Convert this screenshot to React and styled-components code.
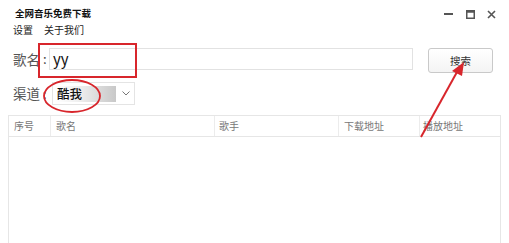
import React from 'react'
import styled, { createGlobalStyle } from 'styled-components'

const Global = createGlobalStyle`
  html, body {
    margin: 0;
    padding: 0;
    background: #ffffff;
  }
  body {
    font-family: "Noto Sans CJK SC", "Liberation Sans", sans-serif;
  }
`

const Window = styled.div`
  position: relative;
  width: 509px;
  height: 243px;
  overflow: hidden;
  background: #ffffff;
`

const TitleBar = styled.div`
  display: flex;
  align-items: center;
  justify-content: space-between;
  height: 24px;
  padding: 2px 13px 0 15px;
  box-sizing: border-box;
`

const Title = styled.div`
  font-size: 9.5px;
  font-weight: 700;
  color: #111;
`

const Controls = styled.div`
  display: flex;
  align-items: center;
  gap: 12px;
  margin-top: 2px;
`

const MenuBar = styled.div`
  display: flex;
  gap: 11px;
  height: 12px;
  padding-left: 13px;
  font-size: 10px;
  line-height: 12px;
  color: #222;
`

const FormRow = styled.div`
  display: flex;
  align-items: flex-start;
  margin-top: ${p => p.top}px;
  padding-left: 13px;
`

const Label = styled.div`
  width: ${p => p.w}px;
  font-size: 13.5px;
  line-height: ${p => p.h}px;
  height: ${p => p.h}px;
  color: #555;
  display: flex;
  align-items: center;
  white-space: nowrap;
`

const Colon = styled.span`
  font-size: 13px;
  color: #444;
  margin-left: 3px;
`

const TextInput = styled.div`
  width: 364px;
  height: 22px;
  box-sizing: border-box;
  border: 1px solid #e2e2e2;
  padding-left: 3px;
  font-size: 15px;
  line-height: 19px;
  color: #111;
`

const Button = styled.div`
  margin-left: 15px;
  width: 65px;
  height: 25px;
  box-sizing: border-box;
  border: 1px solid #c9c9c9;
  border-radius: 3px;
  background: linear-gradient(#ffffff, #f4f4f4);
  display: flex;
  align-items: center;
  justify-content: center;
  font-size: 10.5px;
  color: #333;
`

const Select = styled.div`
  width: 83px;
  height: 23px;
  box-sizing: border-box;
  border: 1px solid #e4e4e4;
  display: flex;
  align-items: center;
  padding: 0 4px 0 3px;
  gap: 6px;
`

const Selected = styled.div`
  flex: 1;
  height: 16px;
  background: linear-gradient(90deg, #ffffff 0%, #eeeeee 40%, #c8c8c8 100%);
  font-size: 12.5px;
  font-weight: 500;
  line-height: 16px;
  color: #111;
  padding-left: 1px;
`

const Table = styled.div`
  margin: 10px 0 0 8px;
  width: 493px;
  height: 140px;
  box-sizing: border-box;
  border: 1px solid #e6e6e6;
`

const HeaderRow = styled.div`
  display: grid;
  grid-template-columns: 41px 164px 124px 81px 1fr;
  height: 20px;
  border-bottom: 1px solid #e6e6e6;
`

const HeaderCell = styled.div`
  font-size: 10px;
  line-height: 20px;
  color: #777;
  padding-left: ${p => p.pad}px;
  border-left: ${p => (p.first ? 'none' : '1px solid #ececec')};
`

const RedBox = styled.div`
  position: absolute;
  left: 38px;
  top: 43px;
  width: 99px;
  height: 35px;
  box-sizing: border-box;
  border: 2px solid #d8262c;
`

const Overlay = styled.svg`
  position: absolute;
  left: 0;
  top: 0;
  pointer-events: none;
`

const columns = [
  { name: '序号', pad: 5 },
  { name: '歌名', pad: 5 },
  { name: '歌手', pad: 4 },
  { name: '下载地址', pad: 5 },
  { name: '播放地址', pad: 3 },
]

export default function App() {
  return (
    <Window>
      <Global />
      <TitleBar>
        <Title>全网音乐免费下载</Title>
        <Controls>
          <svg width="10" height="10" viewBox="0 0 10 10">
            <rect x="0" y="4" width="9" height="2" fill="#555" />
          </svg>
          <svg width="9" height="9" viewBox="0 0 9 9">
            <rect x="0.75" y="0.75" width="7.5" height="7.5" fill="none" stroke="#555" strokeWidth="1.5" />
            <rect x="0.75" y="0.75" width="7.5" height="2" fill="#555" />
          </svg>
          <svg width="9" height="9" viewBox="0 0 9 9">
            <path d="M1 1 L8 8 M8 1 L1 8" stroke="#555" strokeWidth="1.6" />
          </svg>
        </Controls>
      </TitleBar>
      <MenuBar>
        <span>设置</span>
        <span>关于我们</span>
      </MenuBar>
      <FormRow top={12}>
        <Label h={22} w={36}>
          歌名<Colon>:</Colon>
        </Label>
        <TextInput>yy</TextInput>
        <Button>搜索</Button>
      </FormRow>
      <FormRow top={9}>
        <Label h={23} w={39}>
          渠道<Colon>:</Colon>
        </Label>
        <Select>
          <Selected>酷我</Selected>
          <svg width="8" height="5" viewBox="0 0 8 5">
            <path d="M0.5 0.5 L4 4 L7.5 0.5" fill="none" stroke="#777" strokeWidth="1" />
          </svg>
        </Select>
      </FormRow>
      <Table>
        <HeaderRow>
          {columns.map((c, i) => (
            <HeaderCell key={c.name} pad={c.pad} first={i === 0}>
              {c.name}
            </HeaderCell>
          ))}
        </HeaderRow>
      </Table>
      <RedBox />
      <Overlay width="509" height="243" viewBox="0 0 509 243">
        <ellipse cx="72" cy="96" rx="28" ry="16" fill="none" stroke="#d8262c" strokeWidth="1.8" />
        <line x1="421" y1="137" x2="457" y2="72" stroke="#d8262c" strokeWidth="2" />
        <polygon points="464,62 452,71 462,76" fill="#d8262c" />
      </Overlay>
    </Window>
  )
}
